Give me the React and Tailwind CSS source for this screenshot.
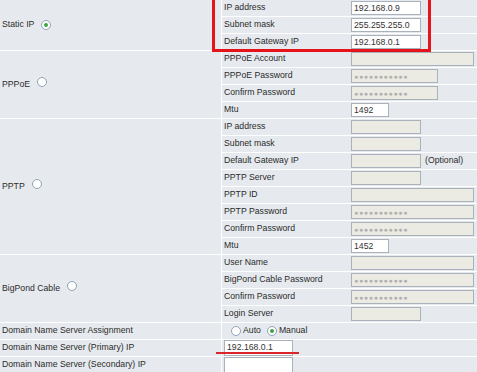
import React from "react";

const Radio = ({ checked }) => (
  <span className="inline-flex items-center justify-center w-[10px] h-[10px] rounded-full border border-[#8fa3b8] bg-white shrink-0">
    {checked && <span className="w-[4px] h-[4px] rounded-full bg-[#3aa640]" />}
  </span>
);

const Input = ({ w, value, disabled, pw }) => {
  const cls = w === "full" ? "w-[123px]" : w === "pw" ? "w-[87px]" : w === "mtu" ? "w-[38px]" : "w-[70px]";
  return (
    <div
      className={`${cls} h-[14px] border border-[#a9b2ba] flex items-center px-[2px] overflow-hidden ${
        disabled ? "bg-[#ecebe3]" : "bg-white"
      }`}
    >
      {pw ? (
        <span className="text-[#b0b0b0] text-[7px] tracking-[0.7px] leading-none">●●●●●●●●●●●</span>
      ) : (
        <span className="text-[#333] leading-none">{value}</span>
      )}
    </div>
  );
};

const Row = ({ label, children }) => (
  <div className="flex h-[16px] bg-[#e6eaee]">
    <div className="w-[129px] flex items-center pl-[2px]">{label}</div>
    <div className="flex-1 flex items-center gap-[4px]">{children}</div>
  </div>
);

const Section = ({ title, checked, rows }) => (
  <div className="flex gap-px">
    <div className="w-[221px] bg-[#e6eaee] flex items-center pl-[2px]">
      <span>{title}</span>
      <span className="ml-[7px]">
        <Radio checked={checked} />
      </span>
    </div>
    <div className="flex-1 flex flex-col gap-px">
      {rows.map((r, i) => (
        <Row key={i} label={r[0]}>
          {r[1]}
        </Row>
      ))}
    </div>
  </div>
);

export default function App() {
  return (
    <div
      className="relative w-[477px] h-[372px] overflow-hidden bg-white text-[8.7px] text-[#2b2b2b]"
      style={{ fontFamily: '"Liberation Sans", Arial, sans-serif' }}
    >
      <div className="flex flex-col gap-px">
        <Section
          title="Static IP"
          checked
          rows={[
            ["IP address", <Input value="192.168.0.9" />],
            ["Subnet mask", <Input value="255.255.255.0" />],
            ["Default Gateway IP", <Input value="192.168.0.1" />],
          ]}
        />
        <Section
          title="PPPoE"
          rows={[
            ["PPPoE Account", <Input w="full" disabled />],
            ["PPPoE Password", <Input w="pw" disabled pw />],
            ["Confirm Password", <Input w="pw" disabled pw />],
            ["Mtu", <Input w="mtu" value="1492" />],
          ]}
        />
        <Section
          title="PPTP"
          rows={[
            ["IP address", <Input disabled />],
            ["Subnet mask", <Input disabled />],
            [
              "Default Gateway IP",
              <>
                <Input disabled />
                <span>(Optional)</span>
              </>,
            ],
            ["PPTP Server", <Input disabled />],
            ["PPTP ID", <Input w="full" disabled />],
            ["PPTP Password", <Input w="full" disabled pw />],
            ["Confirm Password", <Input w="full" disabled pw />],
            ["Mtu", <Input w="mtu" value="1452" />],
          ]}
        />
        <Section
          title="BigPond Cable"
          rows={[
            ["User Name", <Input w="full" disabled />],
            ["BigPond Cable Password", <Input w="full" disabled pw />],
            ["Confirm Password", <Input w="full" disabled pw />],
            ["Login Server", <Input disabled />],
          ]}
        />
        <div className="flex gap-px h-[16px]">
          <div className="w-[221px] bg-[#e6eaee] flex items-center pl-[2px]">Domain Name Server Assignment</div>
          <div className="flex-1 bg-[#e6eaee] flex items-center pl-[9px]">
            <Radio />
            <span className="ml-[2px] mr-[6px]">Auto</span>
            <Radio checked />
            <span className="ml-[2px]">Manual</span>
          </div>
        </div>
        <div className="flex gap-px h-[16px]">
          <div className="w-[221px] bg-[#e6eaee] flex items-center pl-[2px]">Domain Name Server (Primary) IP</div>
          <div className="flex-1 bg-[#e6eaee] flex items-center pl-[2px]">
            <div className="w-[69px] h-[16px] border border-[#a9b2ba] bg-white flex items-center px-[2px] text-[#333]">192.168.0.1</div>
          </div>
        </div>
        <div className="flex gap-px h-[16px]">
          <div className="w-[221px] bg-[#e6eaee] flex items-center pl-[2px]">Domain Name Server (Secondary) IP</div>
          <div className="flex-1 bg-[#e6eaee] flex items-center pl-[2px]">
            <div className="w-[69px] h-[16px] border border-[#a9b2ba] bg-white" />
          </div>
        </div>
      </div>
      <div className="absolute left-[212px] top-[-3px] w-[219px] h-[55px] border-[3px] border-[#e5141b] pointer-events-none" />
      <div className="absolute left-[216px] top-[352px] w-[83px] h-[2px] bg-[#d8262a] pointer-events-none" />
    </div>
  );
}
